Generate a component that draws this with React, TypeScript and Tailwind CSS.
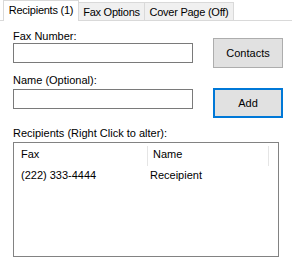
import React from "react";

export default function App() {
  return (
    <div
      className="w-[292px] h-[267px] bg-white text-black text-[11px] leading-[13px] overflow-hidden"
      style={{ fontFamily: '"Liberation Sans", Arial, sans-serif' }}
    >
      {/* Tab strip */}
      <div className="flex h-[21px] tracking-[-0.25px]">
        <div className="w-[3px] h-[21px] border-b border-[#d9d9d9]" />
        <div className="w-[76px] h-[21px] bg-white border-l border-t border-r border-[#d9d9d9] flex justify-center pt-[3px]">
          Recipients (1)
        </div>
        <div className="mt-[2px] w-[66px] h-[19px] bg-[#f0f0f0] border-t border-r border-b border-[#d9d9d9] flex justify-center pt-[3px]">
          Fax Options
        </div>
        <div className="mt-[2px] w-[89px] h-[19px] bg-[#f0f0f0] border-t border-r border-b border-[#d9d9d9] flex justify-center pt-[3px]">
          Cover Page (Off)
        </div>
        <div className="flex-1 h-[21px] border-b border-[#d9d9d9]" />
      </div>

      {/* Content */}
      <div className="pl-[13px]">
        <div className="flex">
          <div className="flex flex-col w-[180px]">
            <div className="mt-[9px]">Fax Number:</div>
            <div className="h-[20px] border border-[#7a7a7a] bg-white" />
            <div className="mt-[11px]">Name (Optional):</div>
            <div className="mt-[2px] h-[20px] border border-[#7a7a7a] bg-white" />
          </div>
          <div className="ml-[20px] flex flex-col">
            <div className="mt-[17px] w-[70px] h-[30px] bg-[#e1e1e1] border border-[#adadad] flex items-center justify-center">
              Contacts
            </div>
            <div className="mt-[20px] w-[70px] h-[30px] bg-[#e1e1e1] border-2 border-[#0078d7] flex items-center justify-center">
              Add
            </div>
          </div>
        </div>

        <div className="mt-[9px]">Recipients (Right Click to alter):</div>
        <div className="mt-[2px] w-[266px] h-[115px] border border-[#828282] bg-white flex flex-col">
          <div className="flex h-[23px] items-center">
            <div className="w-[133px] pl-[7px]">Fax</div>
            <div className="w-px h-[20px] self-end bg-[#e5e5e5]" />
            <div className="w-[120px] pl-[5px]">Name</div>
            <div className="w-px h-[20px] self-end bg-[#e5e5e5]" />
          </div>
          <div className="flex pt-[3px]">
            <div className="w-[133px] pl-[7px]">(222) 333-4444</div>
            <div className="w-px" />
            <div className="w-[120px] pl-[2px]">Receipient</div>
          </div>
        </div>
      </div>
    </div>
  );
}
